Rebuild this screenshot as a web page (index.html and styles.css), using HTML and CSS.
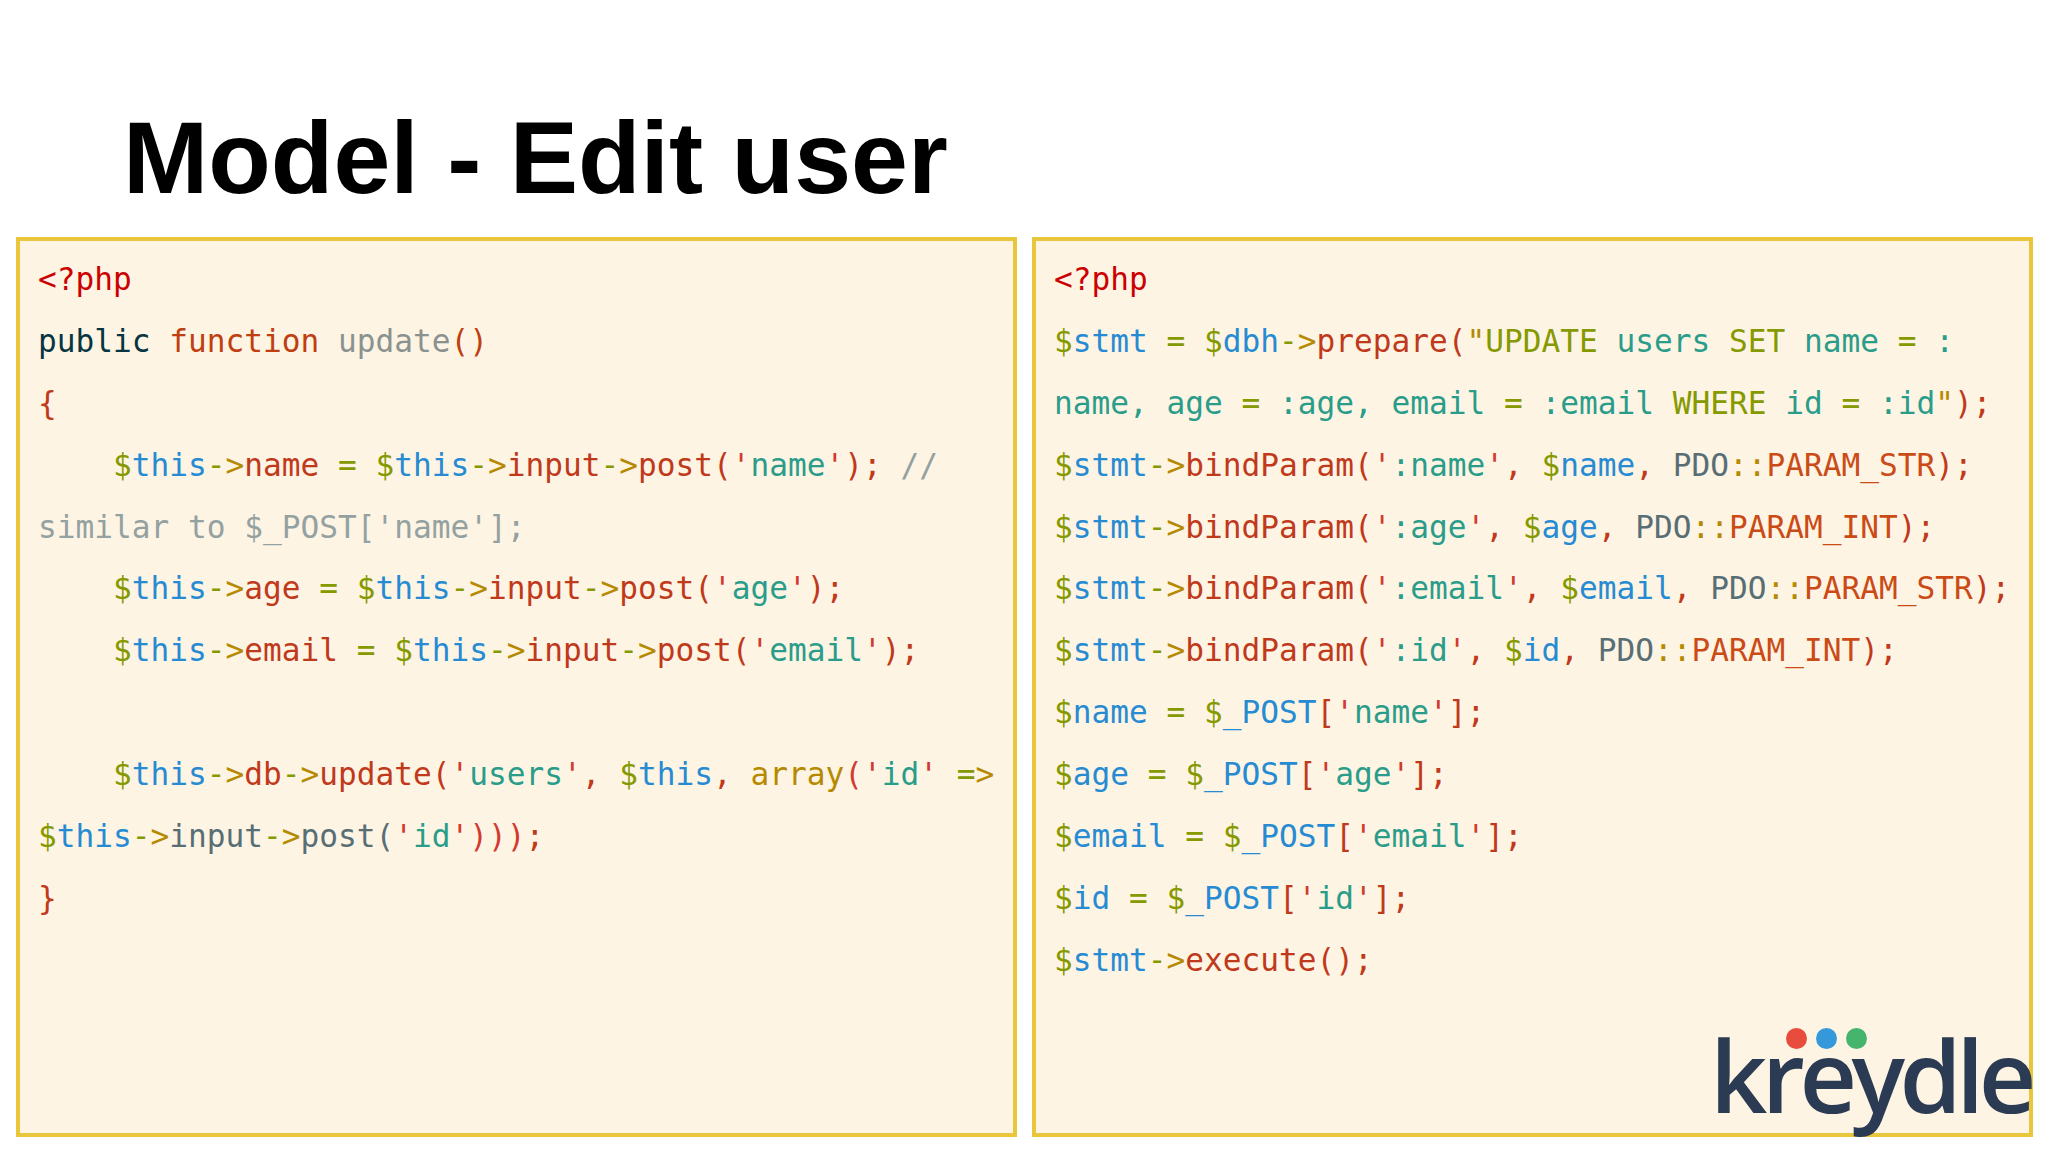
FILE: index.html
```html
<!DOCTYPE html>
<html lang="en">
<head>
<meta charset="utf-8">
<title>Model - Edit user</title>
<link rel="stylesheet" href="styles.css">
</head>
<body>
<h1 class="title">Model - Edit user</h1>
<main class="panels">
<section class="panel">
<div class="ln"><i class="r">&lt;?php</i></div>
<div class="ln"><i class="k">public</i> <i class="o">function</i> <i class="g">update</i><i class="o">()</i></div>
<div class="ln"><i class="e">{</i></div>
<div class="ln">    <i class="y">$</i><i class="b">this</i><i class="y">-</i><i class="a">&gt;</i><i class="e">name</i> <i class="y">=</i> <i class="y">$</i><i class="b">this</i><i class="y">-</i><i class="a">&gt;</i><i class="e">input</i><i class="y">-</i><i class="a">&gt;</i><i class="e">post(</i><i class="d">'</i><i class="t">name</i><i class="d">'</i><i class="e">);</i> <i class="c">//</i></div>
<div class="ln"><i class="c">similar to $_POST['name'];</i></div>
<div class="ln">    <i class="y">$</i><i class="b">this</i><i class="y">-</i><i class="a">&gt;</i><i class="e">age</i> <i class="y">=</i> <i class="y">$</i><i class="b">this</i><i class="y">-</i><i class="a">&gt;</i><i class="e">input</i><i class="y">-</i><i class="a">&gt;</i><i class="e">post(</i><i class="d">'</i><i class="t">age</i><i class="d">'</i><i class="e">);</i></div>
<div class="ln">    <i class="y">$</i><i class="b">this</i><i class="y">-</i><i class="a">&gt;</i><i class="e">email</i> <i class="y">=</i> <i class="y">$</i><i class="b">this</i><i class="y">-</i><i class="a">&gt;</i><i class="e">input</i><i class="y">-</i><i class="a">&gt;</i><i class="e">post(</i><i class="d">'</i><i class="t">email</i><i class="d">'</i><i class="e">);</i></div>
<div class="ln"> </div>
<div class="ln">    <i class="y">$</i><i class="b">this</i><i class="y">-</i><i class="a">&gt;</i><i class="e">db</i><i class="y">-</i><i class="a">&gt;</i><i class="e">update(</i><i class="d">'</i><i class="t">users</i><i class="d">'</i><i class="e">,</i> <i class="y">$</i><i class="b">this</i><i class="e">,</i> <i class="a">array</i><i class="d">(</i><i class="d">'</i><i class="t">id</i><i class="d">'</i> <i class="y">=</i><i class="a">&gt;</i></div>
<div class="ln"><i class="y">$</i><i class="b">this</i><i class="y">-</i><i class="a">&gt;</i><i class="s">input</i><i class="y">-</i><i class="a">&gt;</i><i class="s">post(</i><i class="d">'</i><i class="t">id</i><i class="d">')))</i><i class="e">;</i></div>
<div class="ln"><i class="e">}</i></div>
</section>
<section class="panel">
<div class="ln"><i class="r">&lt;?php</i></div>
<div class="ln"><i class="y">$</i><i class="b">stmt</i> <i class="y">=</i> <i class="y">$</i><i class="b">dbh</i><i class="y">-</i><i class="a">&gt;</i><i class="e">prepare(</i><i class="a">"</i><i class="y">UPDATE</i> <i class="t">users</i> <i class="y">SET</i> <i class="t">name</i> <i class="y">=</i> <i class="t">:</i></div>
<div class="ln"><i class="t">name,</i> <i class="t">age</i> <i class="y">=</i> <i class="t">:age,</i> <i class="t">email</i> <i class="y">=</i> <i class="t">:email</i> <i class="y">WHERE</i> <i class="t">id</i> <i class="y">=</i> <i class="t">:id</i><i class="a">"</i><i class="e">);</i></div>
<div class="ln"><i class="y">$</i><i class="b">stmt</i><i class="y">-</i><i class="a">&gt;</i><i class="e">bindParam(</i><i class="d">'</i><i class="t">:name</i><i class="d">'</i><i class="e">,</i> <i class="y">$</i><i class="b">name</i><i class="e">,</i> <i class="s">PDO</i><i class="a">::</i><i class="n">PARAM_STR</i><i class="e">);</i></div>
<div class="ln"><i class="y">$</i><i class="b">stmt</i><i class="y">-</i><i class="a">&gt;</i><i class="e">bindParam(</i><i class="d">'</i><i class="t">:age</i><i class="d">'</i><i class="e">,</i> <i class="y">$</i><i class="b">age</i><i class="e">,</i> <i class="s">PDO</i><i class="a">::</i><i class="n">PARAM_INT</i><i class="e">);</i></div>
<div class="ln"><i class="y">$</i><i class="b">stmt</i><i class="y">-</i><i class="a">&gt;</i><i class="e">bindParam(</i><i class="d">'</i><i class="t">:email</i><i class="d">'</i><i class="e">,</i> <i class="y">$</i><i class="b">email</i><i class="e">,</i> <i class="s">PDO</i><i class="a">::</i><i class="n">PARAM_STR</i><i class="e">);</i></div>
<div class="ln"><i class="y">$</i><i class="b">stmt</i><i class="y">-</i><i class="a">&gt;</i><i class="e">bindParam(</i><i class="d">'</i><i class="t">:id</i><i class="d">'</i><i class="e">,</i> <i class="y">$</i><i class="b">id</i><i class="e">,</i> <i class="s">PDO</i><i class="a">::</i><i class="n">PARAM_INT</i><i class="e">);</i></div>
<div class="ln"><i class="y">$</i><i class="b">name</i> <i class="y">=</i> <i class="y">$</i><i class="b">_POST</i><i class="e">[</i><i class="d">'</i><i class="t">name</i><i class="d">'</i><i class="e">];</i></div>
<div class="ln"><i class="y">$</i><i class="b">age</i> <i class="y">=</i> <i class="y">$</i><i class="b">_POST</i><i class="e">[</i><i class="d">'</i><i class="t">age</i><i class="d">'</i><i class="e">];</i></div>
<div class="ln"><i class="y">$</i><i class="b">email</i> <i class="y">=</i> <i class="y">$</i><i class="b">_POST</i><i class="e">[</i><i class="d">'</i><i class="t">email</i><i class="d">'</i><i class="e">];</i></div>
<div class="ln"><i class="y">$</i><i class="b">id</i> <i class="y">=</i> <i class="y">$</i><i class="b">_POST</i><i class="e">[</i><i class="d">'</i><i class="t">id</i><i class="d">'</i><i class="e">];</i></div>
<div class="ln"><i class="y">$</i><i class="b">stmt</i><i class="y">-</i><i class="a">&gt;</i><i class="e">execute();</i></div>
<div class="logo">
<div class="dots"><span class="dot dot-red"></span><span class="dot dot-blue"></span><span class="dot dot-green"></span></div>
<div class="word">kreydle</div>
</div>
</section>
</main>
</body>
</html>
```
FILE: styles.css
```css
* { box-sizing: border-box; }
html, body { margin: 0; height: 100%; background: #fff; }
body { width: 2048px; height: 1152px; overflow: hidden; }
.title {
  margin: 0;
  height: 237px;
  padding: 98px 0 0 123px;
  font: 700 102.4px/120px "Liberation Sans", Arial, sans-serif;
  color: #000;
}
.panels { display: flex; gap: 15px; padding: 0 15px 0 16px; }
.panel {
  position: relative;
  flex: 1 1 0;
  height: 900px;
  padding: 8px 0 0 18px;
  background: #fef4e4;
  border: 4px solid #e9c63c;
  font: 400 31.15px/61.88px "DejaVu Sans Mono", monospace;
  color: #586e75;
}
.ln { white-space: pre; height: 61.88px; }
i { font-style: normal; }
.r { color: #cc0000; }
.k { color: #073642; }
.o { color: #bf3f10; }
.g { color: #8a9290; }
.y { color: #859900; }
.b { color: #268bd2; }
.a { color: #b58900; }
.e { color: #c0391b; }
.d { color: #d23a30; }
.t { color: #2a9d8a; }
.c { color: #93a1a1; }
.s { color: #586e75; }
.n { color: #cb4b16; }
.logo { position: absolute; right: -6px; bottom: -11px; width: 320px; height: 120px; }
.dots { position: absolute; left: 71px; top: 4px; display: flex; gap: 9px; }
.dot { width: 21px; height: 21px; border-radius: 50%; }
.dot-red { background: #e84c3d; }
.dot-blue { background: #3498db; }
.dot-green { background: #45b56e; }
.word {
  position: absolute;
  left: -5px;
  bottom: 10px;
  font: 600 100px/120px "Open Sans", sans-serif;
  letter-spacing: -5.5px;
  color: #2a3b53;
}
```
